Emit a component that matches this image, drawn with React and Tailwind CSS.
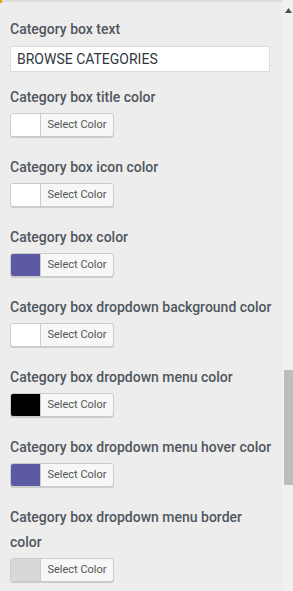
import React from "react";

const font = { fontFamily: "Roboto, 'Liberation Sans', sans-serif" };

function ColorButton({ color }) {
  return (
    <div className="flex h-[24px] w-[104px] overflow-hidden rounded-[3px] border border-[#cccccc] bg-[#f7f7f7] shadow-[0_1px_0_#cccccc]">
      <div className="h-full w-[30px] shrink-0 border-r border-[#cccccc]" style={{ backgroundColor: color }} />
      <div className="flex flex-1 items-center justify-center text-[11px] text-[#555555]">Select Color</div>
    </div>
  );
}

function Section({ label, color }) {
  return (
    <div className="mb-[18px]">
      <div className="mb-[3px] text-[14px] font-medium leading-[25px] text-[#50575e]">{label}</div>
      <ColorButton color={color} />
    </div>
  );
}

export default function App() {
  const items = [
    ["Category box title color", "#ffffff"],
    ["Category box icon color", "#ffffff"],
    ["Category box color", "#5d5aa5"],
    ["Category box dropdown background color", "#ffffff"],
    ["Category box dropdown menu color", "#000000"],
    ["Category box dropdown menu hover color", "#5d5aa5"],
    ["Category box dropdown menu border color", "#d8d8d8"],
  ];
  return (
    <div className="relative h-[591px] w-[293px] overflow-hidden bg-[#ededed]" style={font}>
      <div className="absolute left-0 top-0 h-[2px] w-full bg-[#dcdcdc]" />
      <div className="absolute left-0 top-0 h-[3px] w-[2px] bg-[#f0a30a]" />
      <div className="flex h-full">
        <div className="w-[282px] pl-[10px] pr-[6px] pt-[17px]">
          <div className="text-[14px] font-medium leading-[25px] text-[#50575e]">Category box text</div>
          <div className="mt-[4px] mb-[13px] flex h-[26px] w-[260px] items-center border border-[#dddddd] bg-white pl-[6px] text-[14px] text-[#32373c]">
            BROWSE CATEGORIES
          </div>
          {items.map(([l, c]) => (
            <Section key={l} label={l} color={c} />
          ))}
        </div>
        <div className="relative w-[11px] bg-[#f0f0f0]">
          <svg className="absolute left-[3px] top-[8px]" width="7" height="5" viewBox="0 0 7 5">
            <polygon points="3.5,0 7,5 0,5" fill="#505050" />
          </svg>
          <div className="absolute left-[2px] top-[370px] h-[115px] w-[9px] bg-[#bdbdbd]" />
        </div>
      </div>
    </div>
  );
}
